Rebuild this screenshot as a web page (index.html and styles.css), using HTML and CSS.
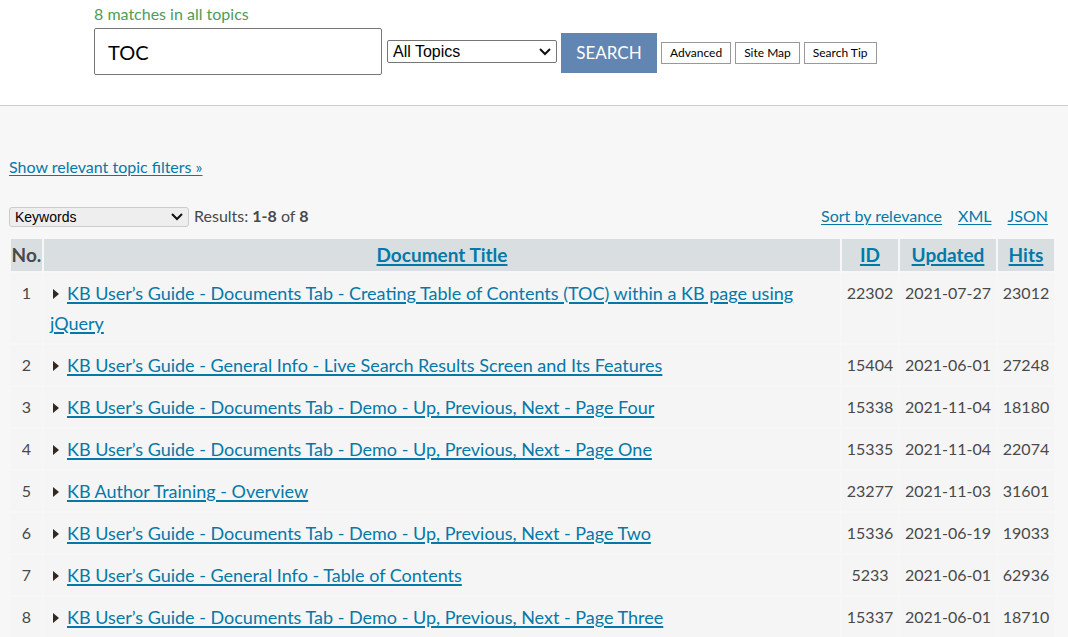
FILE: index.html
```html
<!DOCTYPE html>
<html lang="en">
<head>
<meta charset="utf-8">
<title>Knowledge Base Search</title>
<link rel="stylesheet" href="styles.css">
</head>
<body>
<header class="search">
  <label class="matches" for="q">8 matches in all topics</label>
  <form class="search-form">
    <input class="query" id="q" type="text" value="TOC">
    <select class="topics" aria-label="Topics"><option>All Topics</option></select>
    <button class="submit" type="submit">SEARCH</button>
    <button class="small" type="button">Advanced</button>
    <button class="small" type="button">Site Map</button>
    <button class="small" type="button">Search Tip</button>
  </form>
</header>
<main class="results">
  <a class="filters" href="#">Show relevant topic filters »</a>
  <div class="bar">
    <select class="keywords" aria-label="Display"><option>Keywords</option></select>
    <span class="count">Results: <b>1-8</b> of <b>8</b></span>
    <nav class="formats"><a href="#">Sort by relevance</a><a href="#">XML</a><a href="#">JSON</a></nav>
  </div>
  <table class="docs">
    <colgroup><col class="c-no"><col><col class="c-id"><col class="c-date"><col class="c-hits"></colgroup>
    <thead>
      <tr><th>No.</th><th><a href="#">Document Title</a></th><th><a href="#">ID</a></th><th><a href="#">Updated</a></th><th><a href="#">Hits</a></th></tr>
    </thead>
    <tbody>
      <tr><td>1</td><td class="title"><a href="#">KB User’s Guide - Documents Tab - Creating Table of Contents (TOC) within a KB page using jQuery</a></td><td>22302</td><td>2021-07-27</td><td>23012</td></tr>
      <tr><td>2</td><td class="title"><a href="#">KB User’s Guide - General Info - Live Search Results Screen and Its Features</a></td><td>15404</td><td>2021-06-01</td><td>27248</td></tr>
      <tr><td>3</td><td class="title"><a href="#">KB User’s Guide - Documents Tab - Demo - Up, Previous, Next - Page Four</a></td><td>15338</td><td>2021-11-04</td><td>18180</td></tr>
      <tr><td>4</td><td class="title"><a href="#">KB User’s Guide - Documents Tab - Demo - Up, Previous, Next - Page One</a></td><td>15335</td><td>2021-11-04</td><td>22074</td></tr>
      <tr><td>5</td><td class="title"><a href="#">KB Author Training - Overview</a></td><td>23277</td><td>2021-11-03</td><td>31601</td></tr>
      <tr><td>6</td><td class="title"><a href="#">KB User’s Guide - Documents Tab - Demo - Up, Previous, Next - Page Two</a></td><td>15336</td><td>2021-06-19</td><td>19033</td></tr>
      <tr><td>7</td><td class="title"><a href="#">KB User’s Guide - General Info - Table of Contents</a></td><td>5233</td><td>2021-06-01</td><td>62936</td></tr>
      <tr><td>8</td><td class="title"><a href="#">KB User’s Guide - Documents Tab - Demo - Up, Previous, Next - Page Three</a></td><td>15337</td><td>2021-06-01</td><td>18710</td></tr>
    </tbody>
  </table>
</main>
</body>
</html>
```
FILE: styles.css
```css
* { box-sizing: border-box; }
body {
  margin: 0;
  background: #f7f7f7;
  color: #494949;
  font-family: Lato, "Open Sans", sans-serif;
  font-size: 16px;
  line-height: 20px;
}
a { color: #0479a8; text-decoration: underline; text-underline-offset: 2px; }
.search {
  background: #fff;
  border-bottom: 1px solid #ccc;
  padding: 4px 94px 30px;
}
.matches { display: block; color: #4f9b58; margin-bottom: 4px; }
.search-form { display: flex; align-items: center; gap: 4px; }
.query {
  width: 288px;
  height: 47px;
  padding: 0 13px;
  border: 1px solid #767676;
  border-radius: 2px;
  color: #000;
  font: 20px Lato, sans-serif;
}
.topics, .keywords {
  appearance: none;
  color: #000;
  background: #fff url("data:image/svg+xml,%3Csvg xmlns='http://www.w3.org/2000/svg' width='12' height='8'%3E%3Cpath d='M1 1l5 5 5-5' fill='none' stroke='%23111' stroke-width='2'/%3E%3C/svg%3E") no-repeat right 5px center;
}
.topics {
  width: 170px;
  height: 23px;
  margin-left: 1px;
  padding: 0 5px;
  border: 1px solid #767676;
  border-radius: 2px;
  font: 16px "Liberation Sans", Arial, sans-serif;
}
.submit {
  width: 96px;
  height: 40px;
  padding: 0;
  border: 0;
  background: #6385b2;
  color: #fff;
  font: 17px Lato, sans-serif;
}
.small {
  height: 22px;
  padding: 0 8px;
  border: 1px solid #999;
  background: #fff;
  color: #000;
  font: 12px Lato, sans-serif;
}
.submit, .small { margin-top: 2px; }
.results { padding: 51px 12px 0 9px; }
.filters { display: inline-block; }
.bar { display: flex; align-items: center; gap: 5px; margin-top: 28px; padding-right: 8px; }
.keywords {
  width: 180px;
  height: 20px;
  margin-top: 2px;
  padding: 0 5px;
  border: 1px solid #ccc;
  border-radius: 3px;
  background-color: #eee;
  font: 14px "Liberation Sans", Arial, sans-serif;
}
.formats { display: flex; gap: 16px; margin-left: auto; }
.docs {
  width: 100%;
  margin-top: 10px;
  border-collapse: separate;
  border-spacing: 2px;
  table-layout: fixed;
}
.c-no { width: 31px; }
.c-id, .c-hits { width: 56px; }
.c-date { width: 96px; }
.docs th { padding: 1px 0; background: #d9dfe1; font-size: 19px; line-height: 30px; }
.docs a { text-decoration-thickness: 2px; }
.docs td {
  padding: 5px 0;
  background: #f5f5f5;
  font-size: 16px;
  line-height: 30px;
  text-align: center;
  vertical-align: top;
}
.docs .title { padding: 5px 6px; font-size: 18px; text-align: left; }
.title::before {
  content: "";
  display: inline-block;
  margin: 0 8px 1px 3px;
  border: solid transparent;
  border-width: 5px 0 5px 6px;
  border-left-color: #33291f;
}
```
